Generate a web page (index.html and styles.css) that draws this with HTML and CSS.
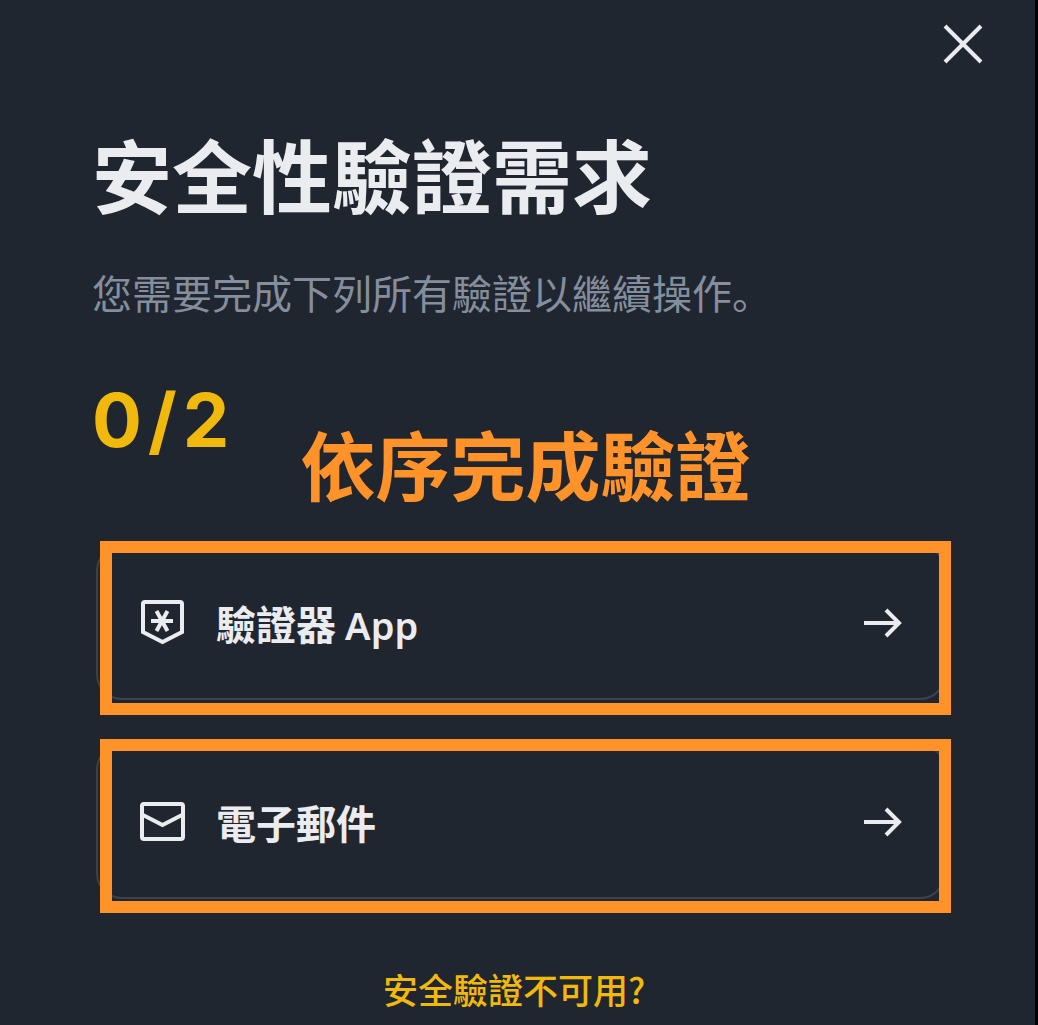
FILE: index.html
```html
<!DOCTYPE html>
<html lang="zh">
<head>
<meta charset="utf-8">
<meta name="viewport" content="width=device-width, initial-scale=1">
<title>安全性驗證需求</title>
<link rel="stylesheet" href="styles.css">
</head>
<body>
<main class="panel">
  <header class="panel-top">
    <button class="close" type="button" aria-label="關閉">
      <svg class="close-icon" viewBox="0 0 40 40" aria-hidden="true"><path d="M2 2L38 38M38 2L2 38"/></svg>
    </button>
  </header>
  <h1 class="title">安全性驗證需求</h1>
  <p class="subtitle">您需要完成下列所有驗證以繼續操作。</p>
  <p class="progress"><span>0</span><span>/</span><span>2</span></p>
  <div class="methods-area">
    <div class="methods">
      <button class="method" type="button">
        <svg class="method-icon" viewBox="0 0 48 48" aria-hidden="true"><path d="M5 5Q5 3 7 3H42Q44 3 44 5V33L24.500 43L5 33ZM13 22H35M18.500 12L29.500 32M29.500 12L18.500 32"/></svg>
        <span class="method-name">驗證器 <span class="latin">App</span></span>
        <svg class="arrow" viewBox="0 0 40 32" aria-hidden="true"><path d="M0 16H36M22 3L35 16L22 29"/></svg>
      </button>
      <button class="method" type="button">
        <svg class="method-icon" viewBox="0 0 48 48" aria-hidden="true"><path d="M6 6H43Q45 6 45 8V39Q45 41 43 41H6Q4 41 4 39V8Q4 6 6 6ZM5 17L24.500 27L44 17"/></svg>
        <span class="method-name">電子郵件</span>
        <svg class="arrow" viewBox="0 0 40 32" aria-hidden="true"><path d="M0 16H36M22 3L35 16L22 29"/></svg>
      </button>
    </div>
    <div class="guide">
      <p class="guide-caption">依序完成驗證</p>
      <div class="guide-box"></div>
      <div class="guide-box"></div>
    </div>
  </div>
  <p class="help"><a class="help-link" href="#">安全驗證不可用?</a></p>
</main>
</body>
</html>
```
FILE: styles.css
```css
* {
  box-sizing: border-box;
}

body {
  margin: 0;
  background: #000;
  color: #eaecef;
  font-family: "Noto Sans CJK SC", sans-serif;
}

.panel {
  min-height: 100vh;
  margin-right: 3px;
  padding: 24px 89px 0 92px;
  background: #202630;
}

.panel-top {
  display: flex;
  justify-content: flex-end;
  margin-right: -37px;
}

button {
  border: 0;
  background: none;
  color: inherit;
  font: inherit;
  cursor: pointer;
}

svg {
  display: block;
  flex: none;
  fill: none;
  stroke: currentColor;
}

.close {
  padding: 0;
}

.close-icon {
  width: 40px;
  height: 40px;
  stroke-width: 4;
}

.title {
  margin: 60px 0 0;
  font-size: 80px;
  line-height: 96px;
  font-weight: 700;
}

.subtitle {
  margin: 42px 0 0;
  color: #848e9c;
  font-size: 40px;
  line-height: 60px;
}

.progress {
  display: flex;
  gap: 6px;
  margin: 50px 0 0;
  color: #f0b90b;
  font-family: Inter, sans-serif;
  font-size: 74px;
  line-height: 96px;
  font-weight: 700;
}

.methods-area {
  position: relative;
  margin: 77px 0 0 4px;
}

.methods {
  display: grid;
  gap: 44px;
}

.method {
  display: flex;
  align-items: center;
  width: 100%;
  height: 155px;
  padding: 0 40px;
  border: 2px solid #3a424e;
  border-radius: 26px;
  text-align: left;
}

.method-icon {
  width: 48px;
  height: 48px;
  stroke-width: 4;
}

.method-name {
  flex: 1;
  margin-left: 30px;
  font-size: 40px;
  line-height: 60px;
  font-weight: 700;
}

.latin {
  font-family: "Noto Sans", sans-serif;
  font-size: 38px;
  line-height: 1;
  font-weight: 600;
}

.arrow {
  width: 40px;
  height: 32px;
  stroke-width: 4;
}

.guide {
  position: absolute;
  top: -4px;
  right: -5px;
  left: 4px;
  display: grid;
  gap: 24px;
  pointer-events: none;
}

.guide-caption {
  position: absolute;
  right: 0;
  bottom: 100%;
  left: 0;
  margin: 0 0 30px;
  color: #ff9228;
  font-size: 75px;
  line-height: 96px;
  font-weight: 700;
  text-align: center;
}

.guide-box {
  height: 174px;
  border: 12px solid #ff9228;
}

.help {
  margin: 64px 10px 0 0;
  font-size: 35px;
  line-height: 52px;
  font-weight: 500;
  text-align: center;
}

.help-link {
  color: #f0b90b;
  text-decoration: none;
}
```
